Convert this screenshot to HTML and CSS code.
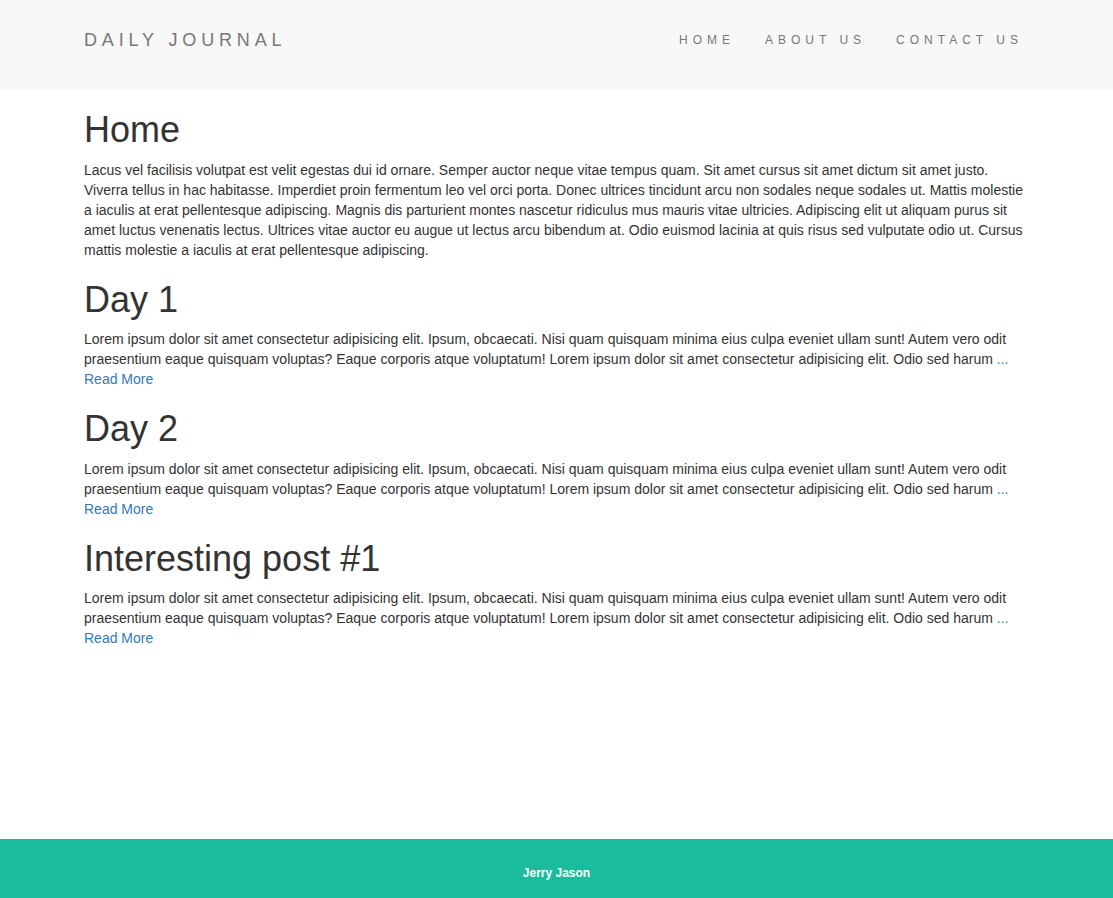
FILE: index.html
```html
<!DOCTYPE html>
<html lang="en">
<head>
<meta charset="utf-8">
<title>Daily Journal</title>
<link rel="stylesheet" href="styles.css">
</head>
<body>
<header class="site-header">
  <div class="header-inner">
    <a class="brand" href="#">DAILY JOURNAL</a>
    <ul class="nav">
      <li><a href="#">HOME</a></li>
      <li><a href="#">ABOUT US</a></li>
      <li><a href="#">CONTACT US</a></li>
    </ul>
  </div>
</header>
<main class="content">
  <h1>Home</h1>
  <p>Lacus vel facilisis volutpat est velit egestas dui id ornare. Semper auctor neque vitae tempus quam. Sit amet cursus sit amet dictum sit amet justo. Viverra tellus in hac habitasse. Imperdiet proin fermentum leo vel orci porta. Donec ultrices tincidunt arcu non sodales neque sodales ut. Mattis molestie a iaculis at erat pellentesque adipiscing. Magnis dis parturient montes nascetur ridiculus mus mauris vitae ultricies. Adipiscing elit ut aliquam purus sit amet luctus venenatis lectus. Ultrices vitae auctor eu augue ut lectus arcu bibendum at. Odio euismod lacinia at quis risus sed vulputate odio ut. Cursus mattis molestie a iaculis at erat pellentesque adipiscing.</p>

  <h1>Day 1</h1>
  <p>Lorem ipsum dolor sit amet consectetur adipisicing elit. Ipsum, obcaecati. Nisi quam quisquam minima eius culpa eveniet ullam sunt! Autem vero odit praesentium eaque quisquam voluptas? Eaque corporis atque voluptatum! Lorem ipsum dolor sit amet consectetur adipisicing elit. Odio sed harum <a href="#">...</a><br><a href="#">Read More</a></p>

  <h1>Day 2</h1>
  <p>Lorem ipsum dolor sit amet consectetur adipisicing elit. Ipsum, obcaecati. Nisi quam quisquam minima eius culpa eveniet ullam sunt! Autem vero odit praesentium eaque quisquam voluptas? Eaque corporis atque voluptatum! Lorem ipsum dolor sit amet consectetur adipisicing elit. Odio sed harum <a href="#">...</a><br><a href="#">Read More</a></p>

  <h1>Interesting post #1</h1>
  <p>Lorem ipsum dolor sit amet consectetur adipisicing elit. Ipsum, obcaecati. Nisi quam quisquam minima eius culpa eveniet ullam sunt! Autem vero odit praesentium eaque quisquam voluptas? Eaque corporis atque voluptatum! Lorem ipsum dolor sit amet consectetur adipisicing elit. Odio sed harum <a href="#">...</a><br><a href="#">Read More</a></p>
</main>
<footer class="site-footer">
  <p class="footer-text">Jerry Jason</p>
</footer>
</body>
</html>
```

FILE: styles.css
```css
html, body {
  margin: 0;
  padding: 0;
}

body {
  font-family: "Liberation Sans", Arial, sans-serif;
  font-size: 14px;
  line-height: 20px;
  color: #333333;
  background: #ffffff;
  min-height: 100vh;
  display: flex;
  flex-direction: column;
}

a {
  color: #337ab7;
  text-decoration: none;
}

.site-header {
  background: #f8f8f8;
  padding: 30px 0 40px;
}

.header-inner {
  width: 945px;
  margin: 0 auto;
  display: flex;
  justify-content: space-between;
  align-items: center;
}

.brand {
  color: #777777;
  font-size: 18px;
  line-height: 20px;
  letter-spacing: 4.85px;
}

.nav {
  list-style: none;
  margin: 0 -9px 0 0;
  padding: 0;
  display: flex;
}

.nav a {
  display: block;
  padding: 0 15px;
  color: #777777;
  font-size: 12px;
  line-height: 20px;
  letter-spacing: 5px;
}

.content {
  width: 945px;
  margin: 0 auto;
  flex: 1 0 auto;
}

.content h1 {
  font-size: 36px;
  font-weight: 500;
  line-height: 1.1;
  margin: 20px 0 10px;
  color: #333333;
}

.content p {
  margin: 0 0 10px;
}

.site-footer {
  background: #1abc9c;
  padding: 24px 0 15px;
  text-align: center;
}

.footer-text {
  margin: 0;
  color: #ffffff;
  font-size: 12px;
  font-weight: bold;
  line-height: 20px;
}
```
